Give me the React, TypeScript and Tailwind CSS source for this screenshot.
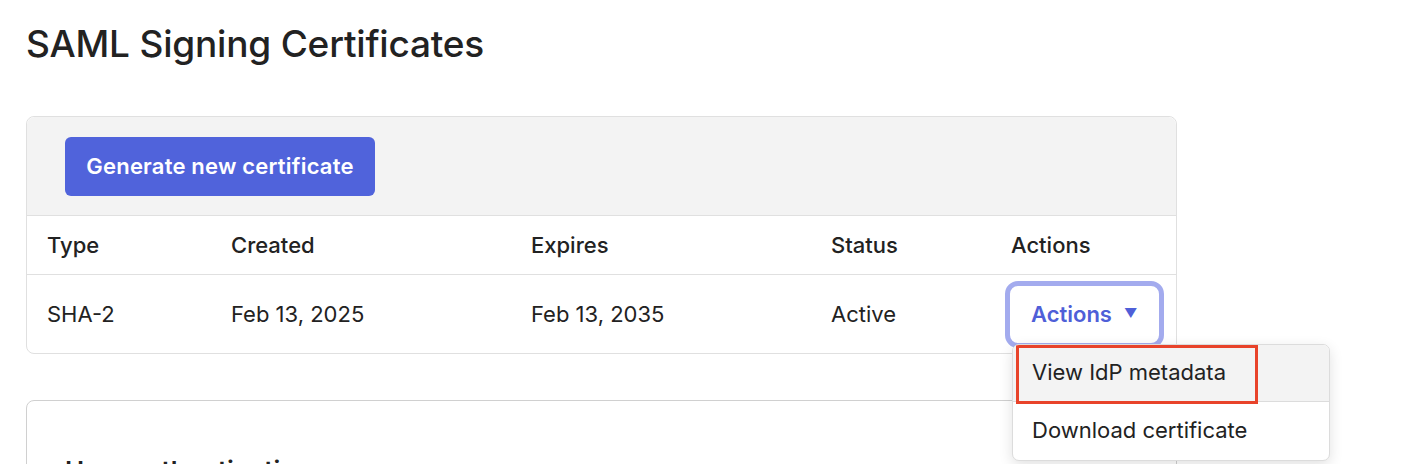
import { useState } from "react"

const cols = "grid grid-cols-[184px_300px_300px_180px_1fr]"

interface Certificate {
  type: string
  created: string
  expires: string
  status: string
}

const certificates: Certificate[] = [
  { type: "SHA-2", created: "Feb 13, 2025", expires: "Feb 13, 2035", status: "Active" },
]

function ActionsMenu() {
  const [open, setOpen] = useState(true)

  return (
    <div className="relative">
      <button
        onClick={() => setOpen(!open)}
        className="ml-[-6px] flex h-[67px] w-[159px] items-center rounded-[13px] border-[5px] border-[#a3abee] bg-white pl-[21px] text-[22px] font-semibold text-[#4f5fd8]"
      >
        Actions
        <span className="ml-[12px] text-[13px]">▼</span>
      </button>

      {open && (
        <div className="absolute left-[1px] top-[63px] z-10 w-[318px] overflow-hidden rounded-[7px] border border-[#dcdcdc] bg-white shadow-[0_4px_14px_rgba(0,0,0,0.12)]">
          <div className="relative flex h-[57px] items-center border-b border-[#dcdcdc] bg-[#f3f3f3] pl-[19px] text-[22px] text-[#222]">
            View IdP metadata
            <div className="absolute left-[3px] top-0 h-[59px] w-[242px] border-[3px] border-[#e8432a]" />
          </div>
          <div className="flex h-[58px] items-center pl-[19px] text-[22px] text-[#222]">Download certificate</div>
        </div>
      )}
    </div>
  )
}

export default function App() {
  return (
    <div className="min-h-screen bg-white font-['Inter',sans-serif] text-[#222]">
      <div className="w-[1177px] pl-[26px] pt-[21px]">
        <h1 className="text-[37px] font-medium leading-[46px] tracking-[-0.2px] text-[#222]">SAML Signing Certificates</h1>

        <div className="mt-[49px] rounded-[8px] border border-[#e0e0e0]">
          <div className="flex h-[99px] items-center rounded-t-[8px] border-b border-[#e0e0e0] bg-[#f3f3f3] pl-[38px]">
            <button className="h-[59px] w-[310px] rounded-[6px] bg-[#5063db] text-[22px] font-semibold tracking-[0.2px] text-white">
              Generate new certificate
            </button>
          </div>

          <div className={`${cols} h-[59px] items-center border-b border-[#e0e0e0] pl-[20px] text-[22px] font-medium`}>
            <div>Type</div>
            <div>Created</div>
            <div>Expires</div>
            <div>Status</div>
            <div>Actions</div>
          </div>

          {certificates.map((cert) => (
            <div key={cert.type} className={`${cols} h-[78px] items-center pl-[20px] text-[22px]`}>
              <div>{cert.type}</div>
              <div>{cert.created}</div>
              <div>{cert.expires}</div>
              <div>{cert.status}</div>
              <ActionsMenu />
            </div>
          ))}
        </div>

        <div className="mt-[46px] flex h-[140px] items-start justify-between rounded-[8px] border border-[#d0d0d0] pl-[38px] pr-[60px] pt-[50px]">
          <h2 className="text-[26px] font-semibold text-[#222]">User authentication</h2>
          <span className="pt-[6px] text-[22px] font-semibold text-[#4f5fd8]">Edit</span>
        </div>
      </div>
    </div>
  )
}
